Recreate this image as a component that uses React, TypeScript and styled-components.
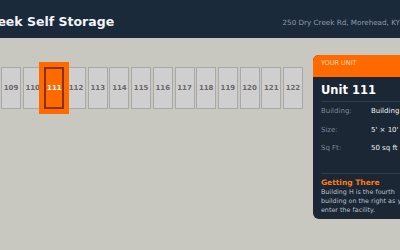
import React from 'react';
import styled, { createGlobalStyle } from 'styled-components';

interface IUnit {
  id: number;
}

const GlobalStyle = createGlobalStyle`
  html, body {
    margin: 0;
    padding: 0;
    background: #c8c8c0;
    font-family: 'DejaVu Sans', Verdana, sans-serif;
  }
`;

const StFrame = styled.div`
  width: 400px;
  height: 250px;
  overflow: hidden;
  background: #c8c8c0;
`;

const StPage = styled.div`
  width: 540px;
  margin-left: -58px;
`;

const StHeader = styled.header`
  height: 38px;
  box-sizing: border-box;
  background: #1b2a3b;
  display: flex;
  align-items: center;
  justify-content: space-between;
  padding: 4px 16px 0 11px;
`;

const StTitle = styled.h1`
  margin: 0;
  font-size: 12.5px;
  font-weight: 700;
  color: #f2f4f7;
`;

const StAddress = styled.span`
  font-size: 7.2px;
  color: #8e9aab;
  margin-top: 3px;
  margin-right: 66px;
`;

const StMain = styled.main`
  display: flex;
  align-items: flex-start;
  padding: 17px 0 0 59px;
`;

const StLot = styled.section`
  flex: none;
  padding-top: 12px;
`;

const StRow = styled.div`
  display: flex;
  gap: 1.7px;
`;

const StUnit = styled.div<{ $selected?: boolean }>`
  width: 20px;
  height: 42px;
  box-sizing: border-box;
  display: flex;
  align-items: center;
  justify-content: center;
  font-size: 7px;
  font-weight: 700;
  position: relative;
  background: ${(p) => (p.$selected ? '#ff6a00' : '#cfcfcf')};
  color: ${(p) => (p.$selected ? '#ffffff' : '#6a6a6a')};
  border: ${(p) => (p.$selected ? '2px solid #8a3204' : '1px solid #a9a9a9')};
  outline: ${(p) => (p.$selected ? '5px solid #ff6a00' : 'none')};
  z-index: ${(p) => (p.$selected ? 1 : 0)};
`;

const StCard = styled.aside`
  width: 112px;
  flex-shrink: 0;
  background: #1b2735;
  border-radius: 6px;
  overflow: hidden;
  margin-left: 10px;
`;

const StCardHead = styled.div`
  background: #ff6a00;
  color: #ffd9b8;
  font-size: 6.5px;
  padding: 4px 8px 0;
  height: 22px;
  box-sizing: border-box;
`;

const StCardBody = styled.div`
  padding: 6px 8px 5px;
`;

const StUnitName = styled.h2`
  margin: 0;
  font-size: 11.5px;
  font-weight: 700;
  color: #ffffff;
  padding-bottom: 4px;
  border-bottom: 1px solid #2e3c4d;
`;

const StInfo = styled.div`
  display: grid;
  grid-template-columns: 50px 1fr;
  row-gap: 10.5px;
  padding: 5px 0 21px;
  font-size: 7px;
  border-bottom: 1px solid #2e3c4d;
`;

const StLabel = styled.span`
  color: #7a8797;
`;

const StValue = styled.span`
  color: #eef1f4;
  white-space: nowrap;
`;

const StSubHead = styled.div`
  margin-top: 4px;
  font-size: 7.5px;
  font-weight: 700;
  color: #ff7a1a;
`;

const StText = styled.p`
  margin: 1px 0 0;
  font-size: 6.4px;
  line-height: 8.8px;
  color: #b9c1cc;
`;

const units: IUnit[] = Array.from({ length: 14 }, (_, i) => ({ id: 109 + i }));

const App = () => {
  const selected = 111;

  return (
    <StFrame>
      <GlobalStyle />
      <StPage>
        <StHeader>
          <StTitle>Dry Creek Self Storage</StTitle>
          <StAddress>250 Dry Creek Rd, Morehead, KY</StAddress>
        </StHeader>
        <StMain>
          <StLot>
            <StRow>
              {units.map((u) => (
                <StUnit key={u.id} $selected={u.id === selected}>
                  {u.id}
                </StUnit>
              ))}
            </StRow>
          </StLot>
          <StCard>
            <StCardHead>YOUR UNIT</StCardHead>
            <StCardBody>
              <StUnitName>Unit {selected}</StUnitName>
              <StInfo>
                <StLabel>Building:</StLabel>
                <StValue>Building H</StValue>
                <StLabel>Size:</StLabel>
                <StValue>5' × 10'</StValue>
                <StLabel>Sq Ft:</StLabel>
                <StValue>50 sq ft</StValue>
              </StInfo>
              <StSubHead>Getting There</StSubHead>
              <StText>
                Building H is the fourth building on the right as you enter the
                facility.
              </StText>
            </StCardBody>
          </StCard>
        </StMain>
      </StPage>
    </StFrame>
  );
};

export default App;
